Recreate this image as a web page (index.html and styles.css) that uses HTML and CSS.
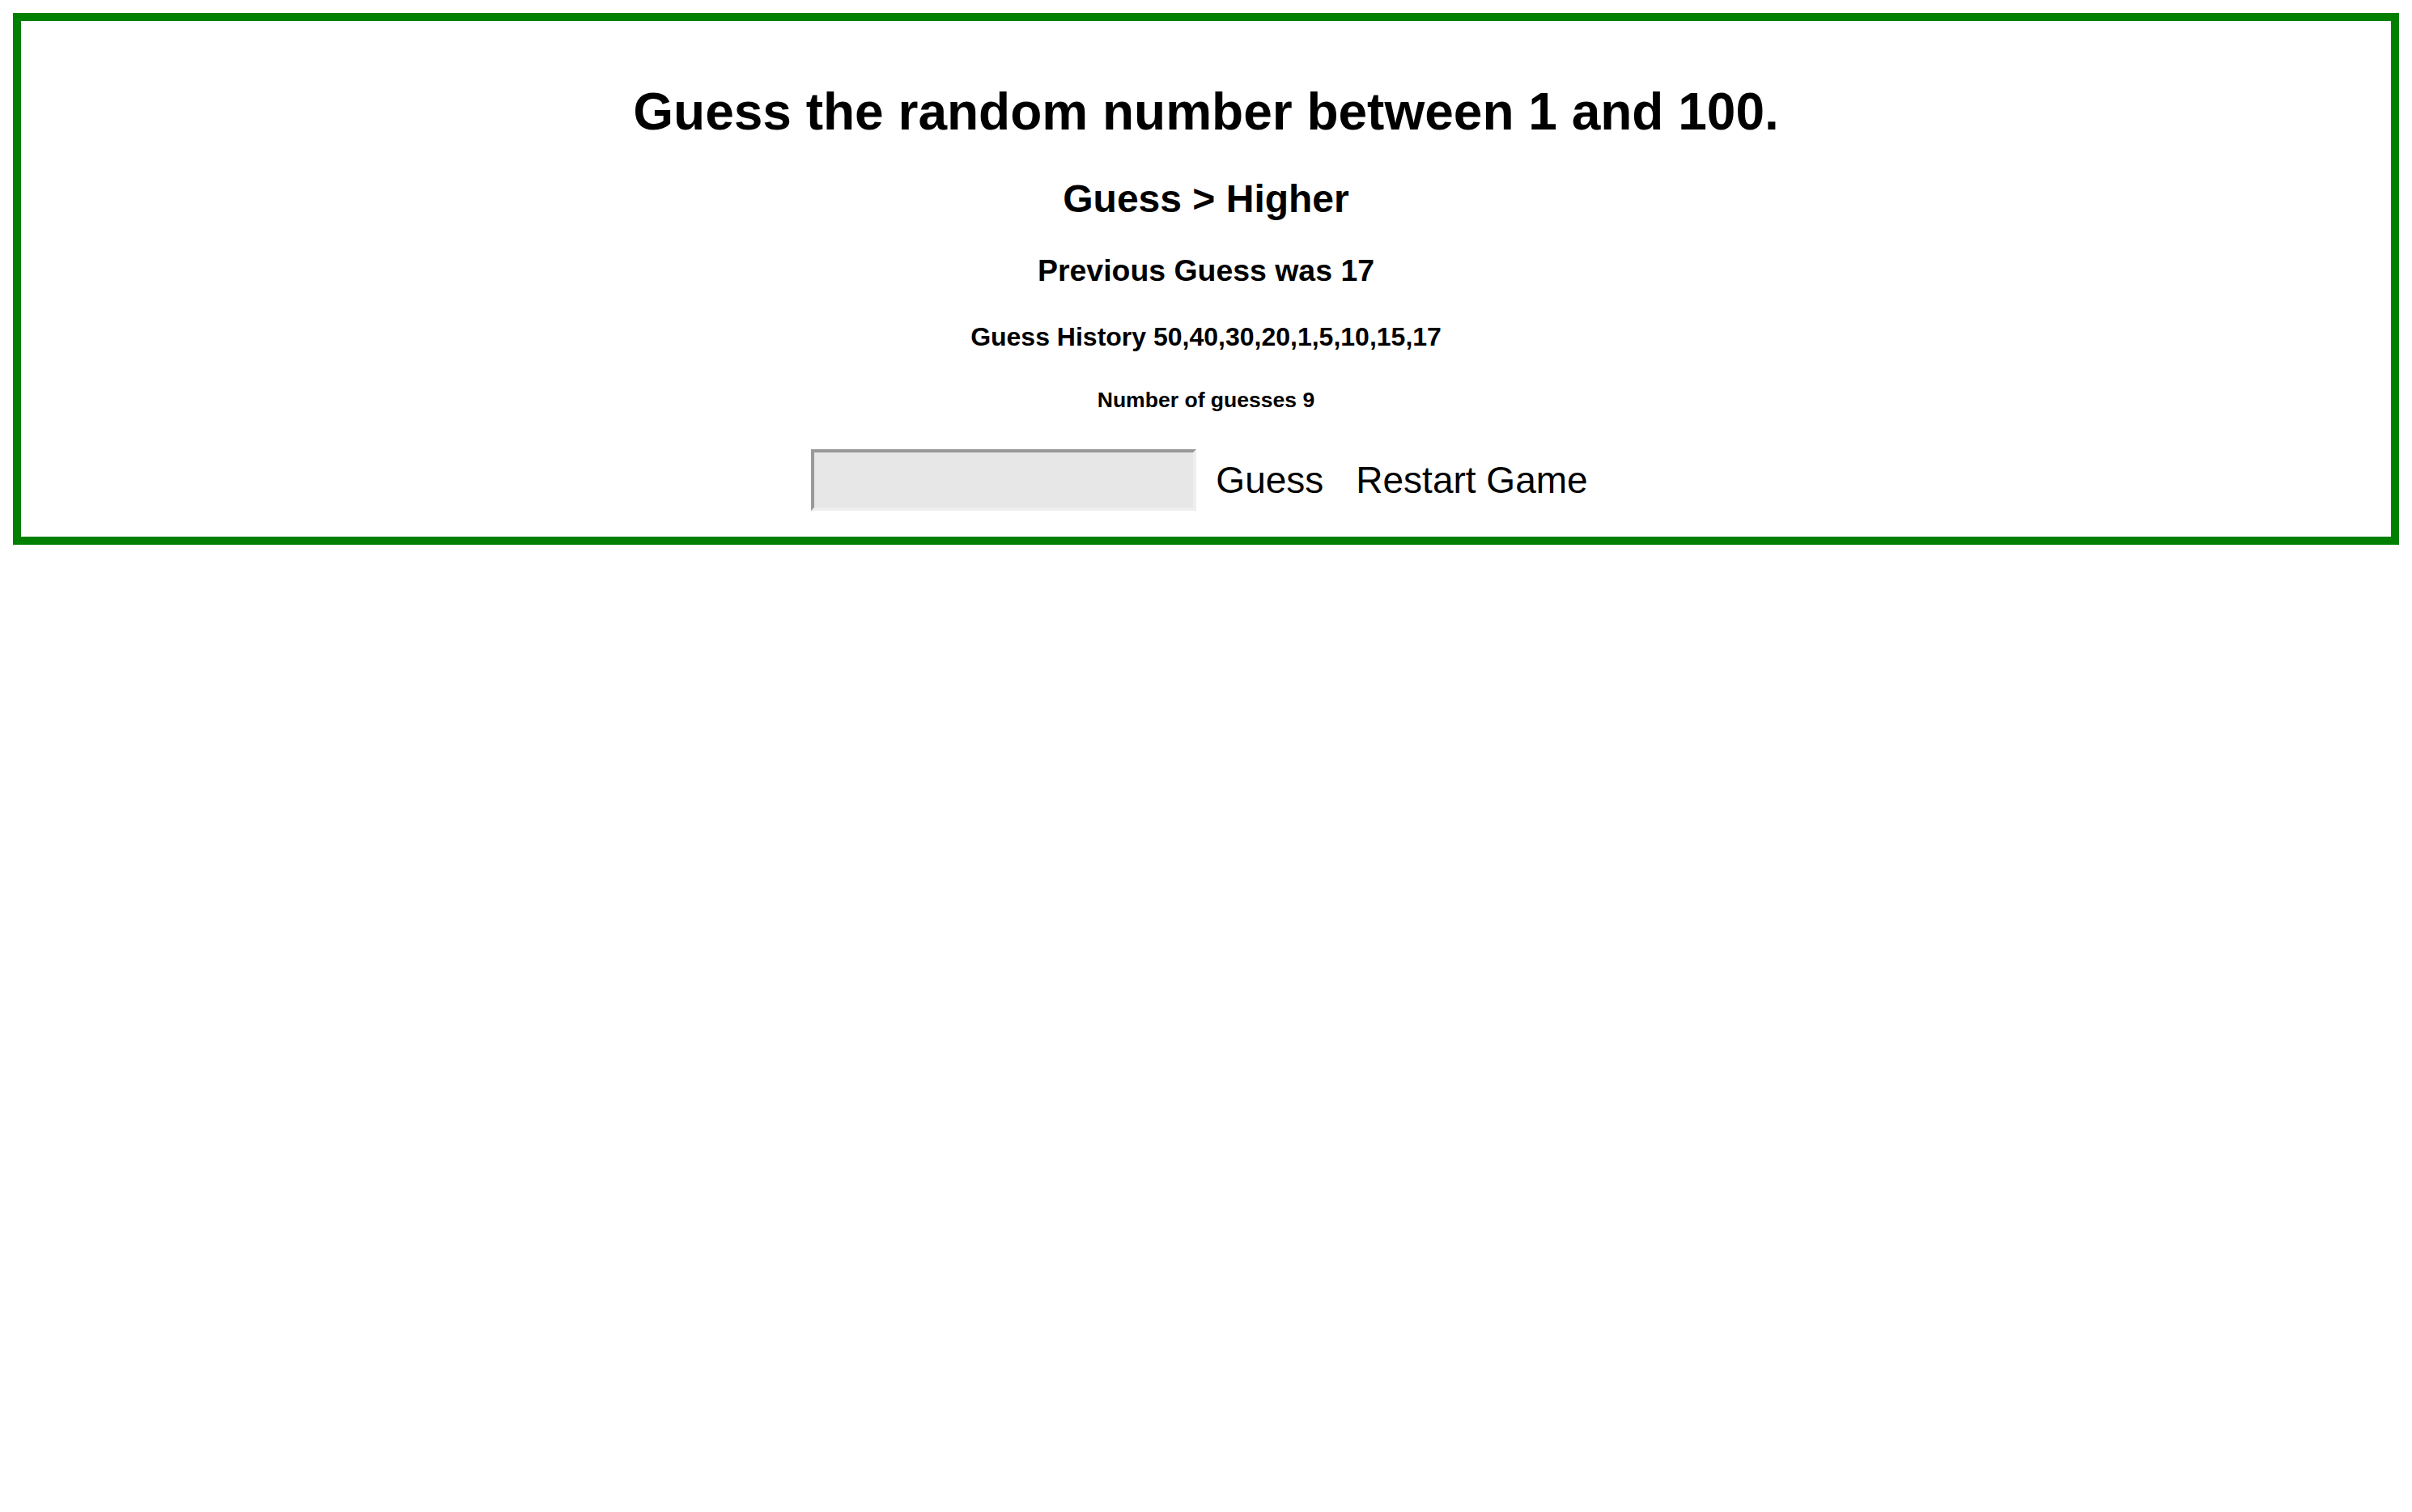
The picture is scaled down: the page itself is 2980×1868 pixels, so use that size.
FILE: index.html
```html
<!DOCTYPE html>
<html>
<head>
<meta charset="utf-8">
<title>Number guessing game</title>
<link rel="stylesheet" href="styles.css">
</head>
<body>
<div class="game">
  <h1 class="title">Guess the random number between 1 and 100.</h1>
  <h2 class="hint">Guess &gt; Higher</h2>
  <h3 class="previous">Previous Guess was 17</h3>
  <h4 class="history">Guess History 50,40,30,20,1,5,10,15,17</h4>
  <h5 class="count">Number of guesses 9</h5>
  <div class="controls">
    <input class="guess-input" type="text">
    <button class="btn" type="button">Guess</button>
    <button class="btn" type="button">Restart Game</button>
  </div>
</div>
</body>
</html>
```
FILE: styles.css
```css
html, body {
  background: #ffffff;
}
body {
  margin: 16px;
  font-family: "Liberation Serif", serif;
  font-size: 32px;
  color: #000;
}
.game {
  border: 10px solid #008000;
  padding: 32px 0;
  text-align: center;
  font-family: "Liberation Sans", Arial, sans-serif;
}
.game h1, .game h2, .game h3, .game h4, .game h5 {
  font-weight: bold;
  line-height: normal;
}
.title {
  font-size: 64px;
  margin: 42.88px 0;
}
.hint {
  font-size: 48px;
  margin: 39.84px 0;
}
.previous {
  font-size: 37.44px;
  margin: 37.44px 0;
}
.history {
  font-size: 32px;
  margin: 42.56px 0;
}
.count {
  font-size: 26.56px;
  margin: 44.35px 0 44.35px;
}
.controls {
  display: flex;
  justify-content: center;
  align-items: center;
  gap: 8px;
  height: 76px;
}
.guess-input {
  box-sizing: border-box;
  width: 476px;
  height: 76px;
  margin: 0;
  padding: 0 8px;
  background: #e7e7e7;
  border-style: solid;
  border-width: 4px;
  border-color: #999999 #efefef #efefef #999999;
  font-family: "Liberation Sans", Arial, sans-serif;
  font-size: 32px;
  outline: none;
}
.btn {
  margin: 0;
  padding: 2px 16px;
  border: none;
  background: transparent;
  font-family: "Liberation Sans", Arial, sans-serif;
  font-size: 46px;
  color: #000;
  cursor: pointer;
}
```
